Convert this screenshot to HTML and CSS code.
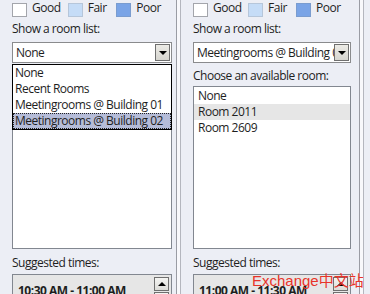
FILE: index.html
```html
<!DOCTYPE html>
<html lang="en">
<head>
    <meta charset="UTF-8">
    <meta name="viewport" content="width=device-width, initial-scale=1.0">
    <title>Room Finder</title>
    <link rel="stylesheet" href="styles.css">
</head>
<body>
    <div class="finder">
        <!-- Left pane: room list dropdown open -->
        <section class="pane pane-left">
            <div class="legend">
                <span class="legend-item"><span class="swatch good"></span>Good</span>
                <span class="legend-item fair-item"><span class="swatch fair"></span>Fair</span>
                <span class="legend-item"><span class="swatch poor"></span>Poor</span>
            </div>
            <div class="caption">Show a room list:</div>
            <div class="combo-wrap">
                <div class="combo">
                    <span class="combo-value">None</span>
                    <span class="combo-button"><span class="tri-down"></span></span>
                </div>
                <ul class="dropdown">
                    <li>None</li>
                    <li>Recent Rooms</li>
                    <li>Meetingrooms @ Building 01</li>
                    <li class="hot">Meetingrooms @ Building 02</li>
                </ul>
            </div>
            <div class="caption">Choose an available room:</div>
            <ul class="listbox"></ul>
            <div class="caption caption-times">Suggested times:</div>
            <div class="times">
                <span class="time-item">10:30 AM - 11:00 AM</span>
                <div class="scroller">
                    <span class="scroll-btn"><span class="tri-up"></span></span>
                    <span class="scroll-btn"></span>
                </div>
            </div>
        </section>

        <div class="splitter"></div>

        <!-- Right pane: building selected -->
        <section class="pane pane-right">
            <div class="legend">
                <span class="legend-item"><span class="swatch good"></span>Good</span>
                <span class="legend-item fair-item"><span class="swatch fair"></span>Fair</span>
                <span class="legend-item"><span class="swatch poor"></span>Poor</span>
            </div>
            <div class="caption">Show a room list:</div>
            <div class="combo-wrap">
                <div class="combo">
                    <span class="combo-value">Meetingrooms @ Building 02</span>
                    <span class="combo-button"><span class="tri-down"></span></span>
                </div>
            </div>
            <div class="caption">Choose an available room:</div>
            <ul class="listbox">
                <li>None</li>
                <li class="picked">Room 2011</li>
                <li>Room 2609</li>
            </ul>
            <div class="caption caption-times">Suggested times:</div>
            <div class="times">
                <span class="time-item">11:00 AM - 11:30 AM</span>
                <div class="scroller">
                    <span class="scroll-btn"><span class="tri-up"></span></span>
                    <span class="scroll-btn"></span>
                </div>
            </div>
            <div class="watermark">Exchange中文站</div>
        </section>

        <div class="splitter"></div>
    </div>
</body>
</html>
```

FILE: styles.css
```css
body {
    margin: 0;
    background: #eceef5;
    font-family: "Open Sans", "Noto Sans", sans-serif;
    font-size: 12px;
    letter-spacing: -0.5px;
    color: #1e1e1e;
    overflow: hidden;
}

.finder {
    display: flex;
    height: 294px;
}

.pane {
    display: flex;
    flex-direction: column;
    position: relative;
}

.pane > * {
    flex: none;
}

.pane-left {
    width: 160px;
    padding: 0 4px 0 12px;
}

.pane-right {
    width: 158px;
    padding: 0 8px 0 12px;
}

.splitter {
    width: 3px;
    border-left: 1px solid #9a9ca4;
    border-right: 1px solid #b4b6be;
    background: #f8f8fb;
}

/* Legend */
.legend {
    display: flex;
    height: 16px;
    line-height: 16px;
}

.legend-item {
    display: flex;
    width: 62px;
}

.legend-item.fair-item {
    width: 54px;
}

.swatch {
    flex: none;
    width: 13px;
    height: 12px;
    margin: 3px 5px 0 0;
    border: 1px solid #a3a5ab;
    background: #fff;
}

.swatch.fair {
    background: #c5dcf7;
    border-color: #b6c6da;
}

.swatch.poor {
    background: #7aa4e6;
    border-color: #7a9ccf;
}

/* Captions */
.caption {
    line-height: 16px;
    margin-top: 5px;
}

.caption-times {
    margin-top: 6px;
}

/* Combo box */
.combo-wrap {
    position: relative;
    margin-top: 5px;
}

.combo {
    display: flex;
    height: 19px;
    border: 1px solid #8a8b8d;
    background: #fff;
}

.combo-value {
    flex: 1;
    padding-left: 3px;
    line-height: 19px;
    white-space: nowrap;
    overflow: hidden;
}

.combo-button {
    flex: none;
    width: 13px;
    height: 15px;
    margin: 1px 1px 1px 0;
    border: 1px solid #6f6f6f;
    background: linear-gradient(#ecebe6, #d6d5cf);
    display: flex;
    align-items: center;
    justify-content: center;
}

.tri-down {
    border-left: 4px solid transparent;
    border-right: 4px solid transparent;
    border-top: 4px solid #000;
}

.tri-up {
    border-left: 4px solid transparent;
    border-right: 4px solid transparent;
    border-bottom: 4px solid #000;
}

/* Open dropdown, lies over the list below */
.dropdown {
    position: absolute;
    left: 0;
    top: 22px;
    right: 0;
    z-index: 2;
    margin: 0;
    padding: 0;
    list-style: none;
    background: #fff;
    border: 1px solid #000;
}

.dropdown li {
    height: 16px;
    line-height: 16px;
    padding-left: 2px;
    white-space: nowrap;
}

.dropdown li.hot {
    background: #b5bcd8;
    outline: 1px dotted #222;
    outline-offset: -1px;
}

/* List box */
.listbox {
    height: 160px;
    margin: 2px 0 0;
    padding: 1px 0 0;
    list-style: none;
    border: 1px solid #828790;
    background: #fff;
}

.listbox li {
    height: 16px;
    line-height: 16px;
    padding-left: 4px;
}

.listbox li.picked {
    background: #e6e6e6;
}

/* Suggested times */
.times {
    display: flex;
    height: 30px;
    margin-top: 3px;
    border: 1px solid #828790;
    background: #e6e6e6;
}

.time-item {
    flex: 1;
    padding: 8px 0 0 5px;
    font-weight: bold;
    line-height: 16px;
}

.scroller {
    display: flex;
    flex-direction: column;
    gap: 1px;
    margin: 2px 2px 0 0;
}

.scroll-btn {
    width: 13px;
    height: 12px;
    border: 1px solid #6f6f6f;
    background: linear-gradient(#f4f4f2, #dcdcd8);
    display: flex;
    align-items: center;
    justify-content: center;
}

.watermark {
    position: absolute;
    left: 71px;
    top: 269px;
    font-family: "Liberation Sans", "Noto Sans CJK SC", sans-serif;
    font-size: 15px;
    letter-spacing: 0;
    color: #e8342a;
    white-space: nowrap;
}
```
